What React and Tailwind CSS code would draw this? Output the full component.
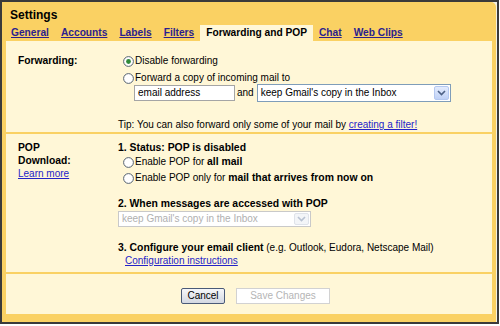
import React from "react";

const Radio = ({ checked }) => (
  <svg width="11" height="11" viewBox="0 0 11 11" className="shrink-0 ml-[5px] mr-[1px]">
    <circle cx="5.5" cy="5.5" r="4.9" fill="#ffffff" stroke="#55626f" strokeWidth="1" />
    {checked && <circle cx="5.5" cy="5.5" r="2.4" fill="#2f8a3a" />}
  </svg>
);

const Chevron = ({ color }) => (
  <svg width="9" height="6" viewBox="0 0 9 6">
    <path d="M1 1 L4.5 4.5 L8 1" fill="none" stroke={color} strokeWidth="1.6" />
  </svg>
);

const tabs = ["General", "Accounts", "Labels", "Filters", "Forwarding and POP", "Chat", "Web Clips"];

export default function App() {
  return (
    <div className="w-[500px] h-[326px] bg-white font-['Liberation_Sans',Arial,sans-serif] text-black">
      <div className="w-[499px] h-[324px] border-2 border-[#3a3a3a] bg-[#f3f0e2]">
        <div className="w-[494px] h-[320px] bg-[#fad163] rounded-tr-[5px] flex flex-col">
          <div className="pl-[8px] pt-[6px] h-[20px] text-[12px] font-bold leading-[14px]">Settings</div>
          <div className="mt-[3px] flex h-[16px] pl-[3px]">
            {tabs.map((t) =>
              t === "Forwarding and POP" ? (
                <div key={t} className="px-[6px] bg-[#fff7d7] text-[10.2px] font-bold leading-[16px] text-black">
                  {t}
                </div>
              ) : (
                <div key={t} className="px-[6px] text-[10.2px] font-bold leading-[16px] text-[#2b1e8e] underline">
                  {t}
                </div>
              )
            )}
          </div>
          <div className="mx-[4px] bg-[#fff7d7] h-[273px] flex flex-col text-[10px]">
            {/* Forwarding */}
            <div className="h-[91px] flex pl-[12px]">
              <div className="w-[100px] pt-[13px] font-bold text-[10.3px] leading-[14px]">Forwarding:</div>
              <div className="flex flex-col pt-[13px]">
                <div className="flex items-center h-[14px] leading-[14px]">
                  <Radio checked />
                  <span>Disable forwarding</span>
                </div>
                <div className="flex items-center h-[14px] mt-[3px] leading-[14px]">
                  <Radio />
                  <span>Forward a copy of incoming mail to</span>
                </div>
                <div className="flex items-center h-[18px] mt-[-1px] pl-[16px]">
                  <div className="w-[101px] h-[16px] border border-[#a5a5a5] bg-white pl-[3px] leading-[14px]">
                    email address
                  </div>
                  <span className="ml-[2px] mr-[3px] leading-[14px]">and</span>
                  <div className="w-[194px] h-[18px] border border-[#7f9db9] bg-white flex items-center justify-between pl-[3px] pr-[1px]">
                    <span className="leading-[14px]">keep Gmail's copy in the Inbox</span>
                    <div className="w-[15px] h-[14px] rounded-[2px] border border-[#b4c8f0] bg-gradient-to-b from-[#e4ecfd] to-[#bfd1f6] flex items-center justify-center">
                      <Chevron color="#4d6185" />
                    </div>
                  </div>
                </div>
                <div className="mt-[16px] leading-[14px]">
                  Tip: You can also forward only some of your mail by{" "}
                  <span className="text-[#2424c8] underline">creating a filter!</span>
                </div>
              </div>
            </div>
            <div className="h-[2px] bg-[#fad163]" />
            {/* POP */}
            <div className="h-[138px] flex pl-[12px]">
              <div className="w-[100px] pt-[7px] font-bold text-[10.3px] leading-[13px] flex flex-col">
                <span>POP</span>
                <span>Download:</span>
                <span className="font-normal text-[10px] text-[#2424c8] underline">Learn more</span>
              </div>
              <div className="flex flex-col pt-[7px]">
                <div className="font-bold text-[10.4px] leading-[13px]">1. Status: POP is disabled</div>
                <div className="flex items-center h-[16px] leading-[14px]">
                  <Radio />
                  <span>
                    Enable POP for <b className="text-[10.4px]">all mail</b>
                  </span>
                </div>
                <div className="flex items-center h-[16px] leading-[14px]">
                  <Radio />
                  <span>
                    Enable POP only for <b className="text-[10.4px]">mail that arrives from now on</b>
                  </span>
                </div>
                <div className="mt-[11px] font-bold text-[10.4px] leading-[13px]">2. When messages are accessed with POP</div>
                <div className="mt-[1px] w-[193px] h-[16px] border border-[#c9c9c9] bg-white flex items-center justify-between pl-[3px] pr-[1px] text-[#b0b0b0]">
                  <span className="leading-[14px]">keep Gmail's copy in the Inbox</span>
                  <div className="w-[15px] h-[12px] rounded-[2px] border border-[#dfe3ea] bg-[#f3f5f8] flex items-center justify-center">
                    <Chevron color="#b8c2d2" />
                  </div>
                </div>
                <div className="mt-[14px] leading-[13px]">
                  <b className="text-[10.4px]">3. Configure your email client</b> (e.g. Outlook, Eudora, Netscape Mail)
                </div>
                <div className="pl-[7px] leading-[13px] text-[#2424c8] underline">Configuration instructions</div>
              </div>
            </div>
            <div className="h-[2px] bg-[#fad163]" />
            {/* Buttons */}
            <div className="flex pl-[175px] pt-[14px] gap-[11px]">
              <div className="w-[44px] h-[16px] border border-[#4a5a78] rounded-[2px] bg-gradient-to-b from-[#f6f7f9] to-[#d3d8e2] text-center leading-[14px]">
                Cancel
              </div>
              <div className="w-[94px] h-[16px] border border-[#d2d2d2] bg-white text-center leading-[14px] text-[#b5b5b5]">
                Save Changes
              </div>
            </div>
          </div>
        </div>
      </div>
    </div>
  );
}
